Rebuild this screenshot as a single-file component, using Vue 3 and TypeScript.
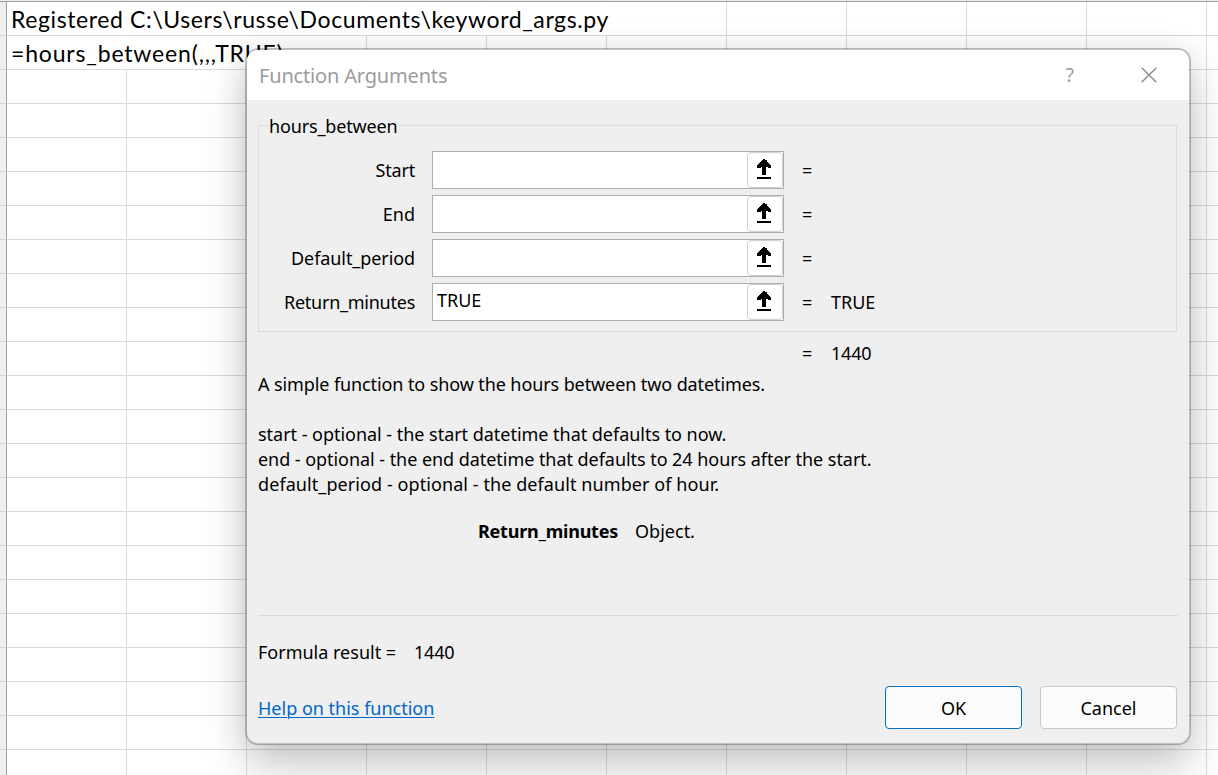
<script setup lang="ts">
interface Argument {
  name: string
  value: string
  result: string
}

const args: Argument[] = [
  { name: 'Start', value: '', result: '' },
  { name: 'End', value: '', result: '' },
  { name: 'Default_period', value: '', result: '' },
  { name: 'Return_minutes', value: 'TRUE', result: 'TRUE' },
]

const cellText: Record<number, string> = {
  1: 'Registered C:\\Users\\russe\\Documents\\keyword_args.py',
  2: '=hours_between(,,,TRUE)',
}

const rows = 23
const columns = 11

// Columns covered by text that overflows from the first cell of a row.
const overflow: Record<number, number> = { 1: 5, 2: 2 }

function isOpen(row: number, column: number): boolean {
  return column <= (overflow[row] ?? 0)
}
</script>

<template>
  <main class="window">
    <div class="sheet">
      <div class="heads">
        <span class="corner"></span>
        <span v-for="c in columns" :key="c" class="head"></span>
      </div>
      <div v-for="r in rows" :key="r" class="row">
        <span class="row-head"></span>
        <span v-for="c in columns" :key="c" class="cell" :class="{ open: isOpen(r, c) }">
          <span v-if="c === 1 && cellText[r]" class="cell-text" :class="'line-' + r">{{ cellText[r] }}</span>
        </span>
      </div>
    </div>

    <section class="dialog">
      <header class="titlebar">
        <h1 class="title">Function Arguments</h1>
        <span class="help">?</span>
        <svg class="close" width="16" height="16" viewBox="0 0 16 16">
          <path d="M0.7 0.7 15.3 15.3M15.3 0.7 0.7 15.3" fill="none" stroke="#8a8a8a" stroke-width="1.4" />
        </svg>
      </header>

      <div class="body">
        <div class="group">
          <div class="legend"><span>hours_between</span></div>
          <div class="fields">
            <div v-for="a in args" :key="a.name" class="field">
              <label class="label" :class="a.name.toLowerCase()">{{ a.name }}</label>
              <div class="input">
                <span class="value">{{ a.value }}</span>
                <button class="pick">
                  <svg width="14" height="20" viewBox="0 0 14 20" shape-rendering="crispEdges">
                    <path
                      d="M6 0H8V1H10V3H11V4H12V5H13V6H14V9H11V8H9V16H5V8H4V9H0V6H1V5H2V4H3V3H4V2H5V1H6Z M0 18H14V20H0Z"
                      fill="#000"
                    />
                  </svg>
                </button>
              </div>
              <span class="equals">=</span>
              <span class="result">{{ a.result }}</span>
            </div>
          </div>
        </div>

        <div class="total">
          <span class="equals">=</span>
          <span class="number">1440</span>
        </div>

        <div class="description">
          <p class="summary">A simple function to show the hours between two datetimes.</p>
          <p>&nbsp;</p>
          <p class="start-text">start - optional - the start datetime that defaults to now.</p>
          <p class="end-text">end - optional - the end datetime that defaults to 24 hours after the start.</p>
          <p class="period-text">default_period - optional - the default number of hour.</p>
        </div>

        <div class="argument">
          <strong>Return_minutes</strong>
          <span>Object.</span>
        </div>

        <div class="formula">
          <span class="formula-label">Formula result =</span>
          <span class="number">1440</span>
        </div>

        <footer class="footer">
          <a class="link">Help on this function</a>
          <button class="button primary">OK</button>
          <button class="button">Cancel</button>
        </footer>
      </div>
    </section>
  </main>
</template>

<style>
body {
  margin: 0;
  overflow: hidden;
}
</style>

<style scoped>
.window {
  position: relative;
  width: 1218px;
  height: 775px;
  overflow: hidden;
  background: #fff;
  color: #000;
  font-family: 'Noto Sans', 'Open Sans', sans-serif;
  font-size: 18px;
  line-height: 25px;
}
.sheet {
  width: 1327px;
}
.heads,
.row {
  display: flex;
}
.heads {
  height: 1px;
  background: #efefef;
  border-bottom: 1px solid #a0a0a0;
}
.corner {
  width: 7px;
}
.head {
  width: 119px;
  border-right: 1px solid #d4d4d4;
}
.row {
  height: 34px;
}
.row-head {
  box-sizing: border-box;
  flex: none;
  width: 7px;
  background: #efefef;
  border-right: 1px solid #a0a0a0;
  border-bottom: 1px solid #d4d4d4;
}
.cell {
  box-sizing: border-box;
  flex: none;
  width: 120px;
  border-right: 1px solid #dadada;
  border-bottom: 1px solid #dadada;
}
.cell.open {
  border-right-color: transparent;
}
.cell-text {
  display: block;
  padding-left: 4px;
  font-family: Lato, 'Open Sans', sans-serif;
  font-size: 23px;
  line-height: 34px;
  letter-spacing: 0.61px;
  white-space: nowrap;
}
.line-2 {
  letter-spacing: 0.83px;
}
.dialog {
  position: absolute;
  left: 245px;
  top: 48px;
  width: 942px;
  height: 693px;
  overflow: hidden;
  background: #efefef;
  background-clip: padding-box;
  border: 2px solid rgba(0, 0, 0, 0.24);
  border-radius: 13px;
  box-shadow:
    0 22px 44px rgba(0, 0, 0, 0.2),
    0 0 32px rgba(0, 0, 0, 0.08);
}
.titlebar {
  display: flex;
  align-items: center;
  height: 50px;
  padding: 0 32px 0 12px;
  background: #fff;
  color: #9b9b9b;
}
.title {
  flex: 1;
  margin: 0;
  font-size: 20px;
  font-weight: 400;
  letter-spacing: -0.17px;
}
.help {
  margin-right: 67px;
  font-size: 19px;
}
.close {
  margin-bottom: 1px;
}
.body {
  padding: 25px 11px 0;
}
.group {
  box-sizing: border-box;
  width: 919px;
  height: 207px;
  border: 1px solid #dcdcdc;
}
.legend {
  height: 25px;
  margin: -12px 0 0 9px;
}
.legend span {
  display: inline-block;
  padding: 0 1px;
  background: #efefef;
  letter-spacing: -0.15px;
}
.fields {
  display: grid;
  gap: 6px;
  margin-top: 12px;
}
.field {
  display: flex;
  align-items: center;
  height: 38px;
}
.label {
  width: 156px;
  margin-right: 17px;
  text-align: right;
}
.start {
  letter-spacing: -0.2px;
}
.default_period {
  letter-spacing: -0.08px;
}
.return_minutes {
  letter-spacing: -0.25px;
}
.input {
  box-sizing: border-box;
  display: flex;
  width: 352px;
  height: 38px;
  border: 1px solid #abadb3;
  background: #fff;
}
.value {
  flex: 1;
  padding: 4px 0 0 4px;
}
.pick {
  display: flex;
  width: 36px;
  height: 36px;
  padding: 6px 0 0 9px;
  border: 1px solid #d0d0d0;
  border-radius: 4px;
  background: #fff;
}
.equals {
  width: 29px;
  margin-left: 18px;
}
.number {
  letter-spacing: -0.2px;
}
.total {
  display: flex;
  margin: 9px 0 0 526px;
}
.description {
  margin-top: 6px;
}
.description p {
  margin: 0;
  white-space: nowrap;
}
.summary {
  letter-spacing: -0.1px;
}
.start-text {
  letter-spacing: -0.03px;
}
.end-text {
  letter-spacing: -0.05px;
}
.period-text {
  letter-spacing: 0.08px;
}
.argument {
  display: flex;
  gap: 17px;
  height: 72px;
  margin: 22px 0 0 220px;
  padding-bottom: 24px;
}
.argument strong {
  letter-spacing: -0.22px;
}
.formula {
  display: flex;
  border-top: 1px solid #dadada;
  padding-top: 24px;
}
.formula-label {
  width: 156px;
}
.footer {
  display: flex;
  align-items: center;
  gap: 18px;
  margin: 21px 1px 0 0;
}
.link {
  margin-right: auto;
  padding-top: 2px;
  color: #0066cc;
  text-decoration: underline;
  text-decoration-thickness: 1px;
  text-underline-offset: 2px;
}
.button {
  width: 137px;
  height: 43px;
  padding: 2px 0 0;
  border: 1px solid #c8c8c8;
  border-radius: 4px;
  background: #fbfbfb;
  font: inherit;
  color: #000;
}
.primary {
  border-color: #0070c8;
}
</style>
